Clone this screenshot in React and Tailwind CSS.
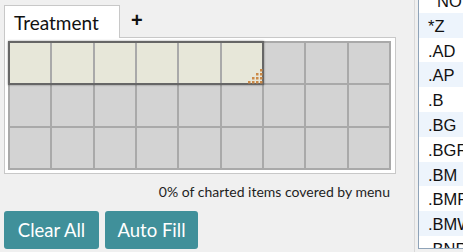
import React from "react";

const codes = ["NO", "*Z", ".AD", ".AP", ".B", ".BG", ".BGR", ".BM", ".BMR", ".BMW", ".BNR"];

function ResizeDots() {
  const dots = [];
  for (let r = 0; r < 4; r++) {
    for (let c = 0; c < 4 - r; c++) {
      dots.push(<rect key={`${r}-${c}`} x={13 - 4 * c} y={13 - 4 * r} width="2.5" height="2.5" fill="#cc8a48" />);
    }
  }
  return (
    <svg width="16" height="16" viewBox="0 0 16 16" className="absolute right-[-1px] bottom-[-1px]">
      {dots}
    </svg>
  );
}

function Grid() {
  const cells = Array.from({ length: 27 }, (_, i) => i);
  return (
    <div className="relative w-[383px] h-[129px] bg-[#a9a9a9] p-[2px] grid grid-cols-9 grid-rows-3 gap-[2px]">
      {cells.map((i) => (
        <div key={i} className={i < 6 ? "bg-[#e7e7d9]" : "bg-[#d3d3d3]"} />
      ))}
      <div className="absolute left-0 top-0 w-[256px] h-[44px] border-2 border-[#666] shadow-[0_0_2px_rgba(0,0,0,0.4)]">
        <ResizeDots />
      </div>
    </div>
  );
}

export default function App() {
  return (
    <div className="w-[463px] h-[252px] bg-[#f0f0f0] flex overflow-hidden" style={{ fontFamily: "Lato, 'Noto Sans', sans-serif" }}>
      <div className="w-[415px] shrink-0 border-r border-[#d9d9d9] pl-[4px] pt-[5px]">
        <div className="flex items-center -mb-px relative z-10">
          <div className="w-[116px] h-[33px] bg-white border border-b-0 border-[#c8c8c8] pl-[9px] flex items-center text-[19px] text-[#111] leading-none pt-[1px]">
            Treatment
          </div>
          <span className="ml-[11px] text-[20px] font-bold text-[#111] leading-none pb-[3px]" style={{ fontFamily: "'Liberation Sans', sans-serif" }}>+</span>
        </div>
        <div className="w-[392px] bg-white border border-[#c8c8c8] p-[3px]">
          <Grid />
        </div>
        <div className="w-[386px] text-right text-[14px] text-[#1e1e1e] mt-[8.5px] leading-[17px]">
          0% of charted items covered by menu
        </div>
        <div className="flex gap-[6px] mt-[11.5px]">
          <button className="w-[95px] h-[38px] rounded-[3px] bg-[#40909a] text-white text-[18.5px] leading-none">Clear All</button>
          <button className="w-[93px] h-[38px] rounded-[3px] bg-[#40909a] text-white text-[18.5px] leading-none">Auto Fill</button>
        </div>
      </div>
      <div className="ml-[3px] flex-1 h-[249px] border-l border-b border-[#8fa3b8] bg-white overflow-hidden">
        <div className="mt-[-12px]" style={{ fontFamily: "'Liberation Sans', Arial, sans-serif" }}>
          {codes.map((c, i) => (
            <div
              key={c}
              className={`h-[24.8px] flex items-center text-[16.5px] text-[#111] pt-[2px] ${i % 2 === 1 ? "bg-[#edf4fc]" : "bg-white"} ${i === 0 ? "pl-[18px]" : "pl-[9px]"}`}
            >
              {c}
            </div>
          ))}
        </div>
      </div>
    </div>
  );
}
